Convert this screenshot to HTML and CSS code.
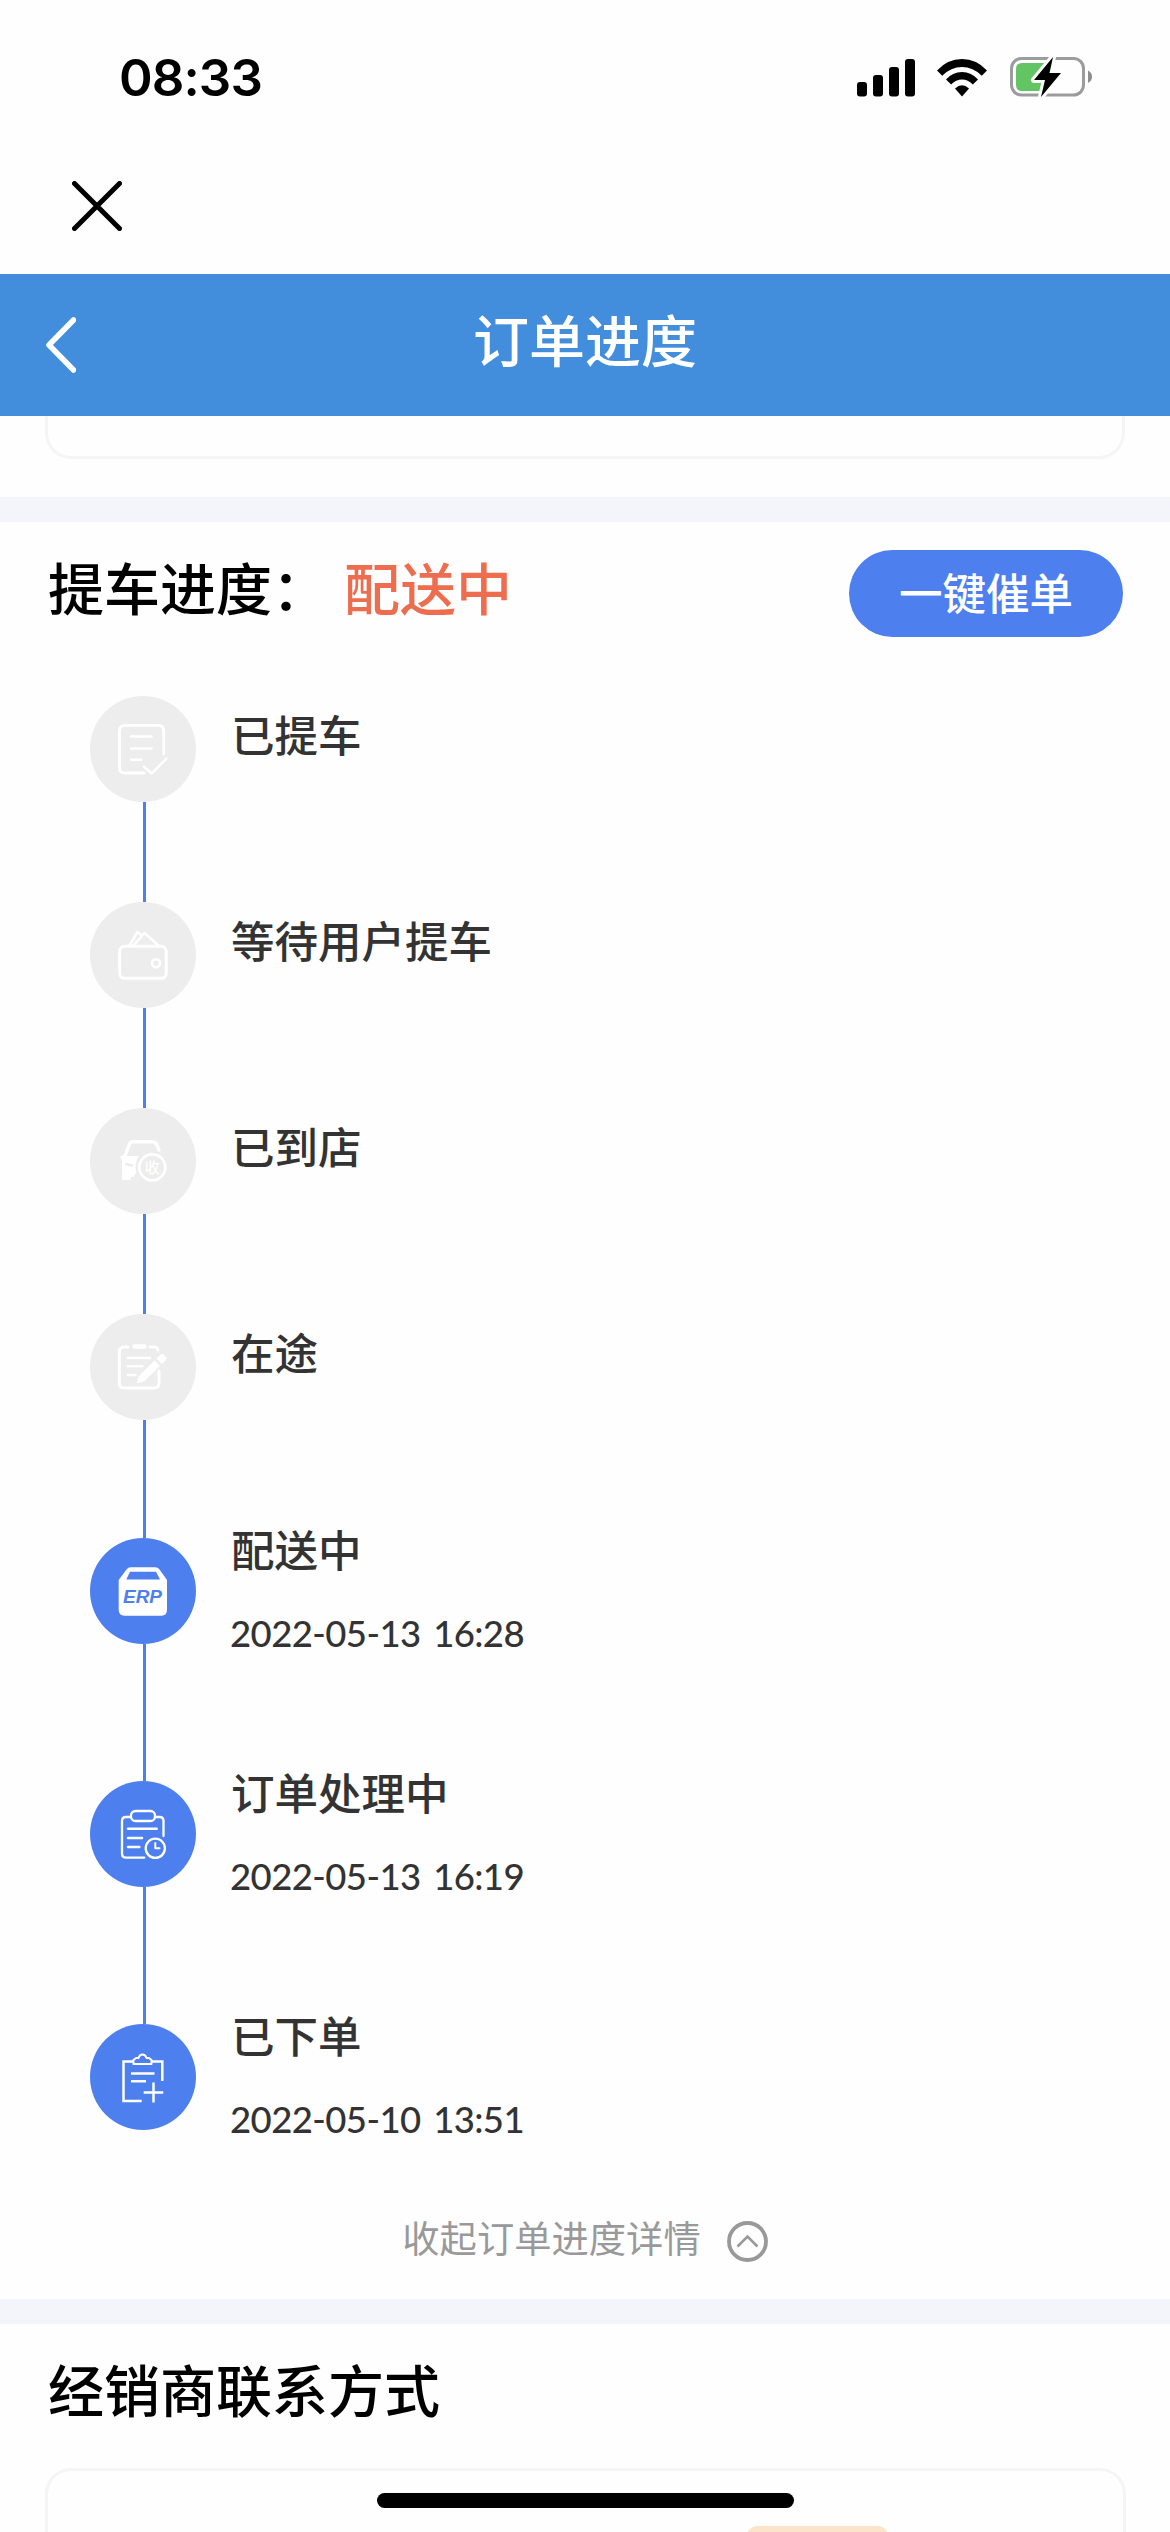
FILE: index.html
```html
<!DOCTYPE html>
<html lang="zh-CN">
<head>
  <meta charset="UTF-8" />
  <meta name="viewport" content="width=device-width, initial-scale=1.0"/>
  <title>订单进度</title>
  <link rel="stylesheet" href="styles.css">
</head>
<body>
<div class="page">

  <!-- 状态栏 -->
  <div class="status-bar">
    <div class="time">08:33</div>
    <div class="status-icons">
      <svg class="signal" width="58" height="38" viewBox="0 0 58 38">
        <rect x="0" y="23" width="10" height="14.5" rx="3"/>
        <rect x="16" y="16" width="10" height="21.5" rx="3"/>
        <rect x="32" y="8" width="10" height="29.5" rx="3"/>
        <rect x="48" y="0" width="10" height="37.5" rx="3"/>
      </svg>
      <svg class="wifi" width="50" height="38" viewBox="0 0 50 38">
        <path d="M0 11.500Q10.500 0 25 0T50 11.500L44.800 16.700Q36 8 25 8T5.200 16.700Z"/>
        <path d="M9 20.500Q15.500 13 25 13T41 20.500L35.800 25.500Q31 20.500 25 20.500T14.200 25.500Z"/>
        <path d="M18 29.500Q25 23 32 29.500L25 37.500Z"/>
      </svg>
      <svg class="battery" width="83" height="42" viewBox="0 0 83 42">
        <rect x="1.500" y="2.500" width="72" height="36.500" rx="10" fill="none" stroke="#9c9c9e" stroke-width="3"/>
        <path d="M12 7H38V35H12Q6 35 6 29V13Q6 7 12 7Z" fill="#62c462"/>
        <path d="M78 14.500Q82 16.500 82 20.700T78 27Z" fill="#8e8e90"/>
        <path d="M43 1L24 24H35L31 41L51 17H39.500Z" fill="#000" stroke="#fff" stroke-width="6" stroke-linejoin="round" paint-order="stroke"/>
      </svg>
    </div>
  </div>

  <div class="close-bar">
    <svg width="50" height="50" viewBox="0 0 50 50"><path d="M2.500 2.500L47.500 47.500M47.500 2.500L2.500 47.500" fill="none" stroke="#000" stroke-width="5" stroke-linecap="round"/></svg>
  </div>

  <!-- 标题栏 -->
  <header class="nav">
    <svg width="30" height="56" viewBox="0 0 30 56"><path d="M27.500 3L3 28L27.500 53" fill="none" stroke="#fff" stroke-width="5.500" stroke-linecap="round" stroke-linejoin="round"/></svg>
    <h1>订单进度</h1>
  </header>

  <div class="prev-section">
    <div class="card-end"></div>
  </div>

  <!-- 提车进度 -->
  <section class="progress">
    <div class="progress-head">
      <h2>提车进度：</h2>
      <span class="state">配送中</span>
      <button class="urge">一键催单</button>
    </div>

    <ul class="steps">
      <li class="step">
        <div class="rail">
          <svg class="dot" viewBox="0 0 106 106">
            <path d="M54 77H35Q29.500 77 29.500 71.500V35Q29.500 29.300 35 29.300H68Q73.700 29.300 73.700 35V58" stroke-width="2.800"/>
            <path d="M41 40.500H61.500M41 52.500H61.500M41 63.700H51.300M54 70.700L61.700 77.500L76.500 62.500" stroke-width="2.400"/>
          </svg>
          <i class="line"></i>
        </div>
        <div class="info"><h3>已提车</h3></div>
      </li>
      <li class="step">
        <div class="rail">
          <svg class="dot" viewBox="0 0 106 106">
            <rect x="29.700" y="44.300" width="46.500" height="32" rx="5" stroke-width="3"/>
            <path d="M39.500 43.500L47.500 30L51 33M43.500 43.500L54.500 31L68.500 43.500" stroke-width="2.600"/>
            <circle cx="66" cy="61.300" r="4" stroke-width="2.600"/>
          </svg>
          <i class="line"></i>
        </div>
        <div class="info"><h3>等待用户提车</h3></div>
      </li>
      <li class="step">
        <div class="rail">
          <svg class="dot" viewBox="0 0 106 106">
            <path d="M35 48L39.500 36Q40.500 33.700 43 33.700H62Q65 33.700 66.500 36L69 42" stroke-width="3.400"/>
            <path d="M30 49L35 46L36 48H49Q44 55 46 65L43.500 69H41V72H32V52Z" fill="#fff" stroke="none"/>
            <path d="M36 56L42 57.500" stroke="#ededed" stroke-width="2.400"/>
            <circle cx="62.300" cy="59.300" r="13" stroke-width="2.700"/>
            <text class="shou" x="62.300" y="65">收</text>
          </svg>
          <i class="line"></i>
        </div>
        <div class="info"><h3>已到店</h3></div>
      </li>
      <li class="step step-last-todo">
        <div class="rail">
          <svg class="dot" viewBox="0 0 106 106">
            <path d="M38 33H34Q29.300 33 29.300 38V69Q29.300 74 34 74H64Q69 74 69 69V57M60 33H64Q67 33 68 36" stroke-width="3"/>
            <path d="M44.500 32.500H54.500" stroke-width="4.500"/>
            <path d="M38 44H60M38 52.300H52.500M38 61H45.500" stroke-width="2.600"/>
            <path d="M47 69.500L48.500 62.500L64.500 46.500L70 52L54 67.500ZM66.500 44.500L71 40L73 40L76.500 43.500L76 46L72 50Z" fill="#fff" stroke="none"/>
          </svg>
          <i class="line"></i>
        </div>
        <div class="info"><h3>在途</h3></div>
      </li>
      <li class="step done">
        <div class="rail">
          <svg class="dot" viewBox="0 0 106 106">
            <path d="M41 29.300H65Q68 29.300 69.500 31.500L77 42V72Q77 77.700 71.500 77.700H34.500Q28.700 77.700 28.700 72V42L36.500 31.500Q38 29.300 41 29.300Z" fill="#fff" stroke="none"/>
            <path d="M40 33.700H66L70 41.500H36.300Z" fill="#4d80ee" stroke="none"/>
            <text class="erp" x="52.500" y="65">ERP</text>
          </svg>
          <i class="line"></i>
        </div>
        <div class="info"><h3>配送中</h3><p>2022-05-13 16:28</p></div>
      </li>
      <li class="step done">
        <div class="rail">
          <svg class="dot" viewBox="0 0 106 106">
            <path d="M41 36H36Q32 36 32 40V72.500Q32 76.700 36 76.700H54.300M65 36H69.500Q73.500 36 73.500 40V55" stroke-width="2.300"/>
            <rect x="41" y="30" width="24" height="10" rx="4.500" stroke-width="2.300"/>
            <path d="M38 47.700H66.700M38 57H52M38 66H49.300" stroke-width="2.500"/>
            <circle cx="65.300" cy="67.300" r="9.600" stroke-width="2.300"/>
            <path d="M65.300 62V67.300H69.500" stroke-width="2"/>
          </svg>
          <i class="line"></i>
        </div>
        <div class="info"><h3>订单处理中</h3><p>2022-05-13 16:19</p></div>
      </li>
      <li class="step done">
        <div class="rail">
          <svg class="dot" viewBox="0 0 106 106">
            <path d="M43 37.500H33.500V77H51.700M62 37.500H72.300V57" stroke-width="2.500" stroke-linecap="butt" stroke-linejoin="miter"/>
            <path d="M43.500 40V36L46 34H48.500Q49.500 30.500 52.500 30.500T56.500 34H59L61.500 36V40Z" stroke-width="2"/>
            <path class="flat" d="M41 49.500H64.500M41 57.200H56M53.700 68.500H73.300M63.500 58.500V78.500" stroke-width="2.500" stroke-linecap="butt"/>
          </svg>
        </div>
        <div class="info"><h3>已下单</h3><p>2022-05-10 13:51</p></div>
      </li>
    </ul>

    <div class="fold">
      <span>收起订单进度详情</span>
      <svg width="41" height="41" viewBox="0 0 41 41" fill="none" stroke="#999">
        <circle cx="20.500" cy="20.500" r="18.500" stroke-width="3.800"/>
        <path d="M10.500 25.500L20.500 15.500L30.500 25.500" stroke-width="2.600"/>
      </svg>
    </div>
  </section>

  <!-- 经销商 -->
  <section class="dealer">
    <h2>经销商联系方式</h2>
    <div class="dealer-card"><span class="tag"></span></div>
  </section>

  <div class="home-bar"></div>
</div>
</body>
</html>
```
FILE: styles.css
```css
* {
  margin: 0;
  padding: 0;
  box-sizing: border-box;
}

body {
  background: #fff;
  font-family: "Noto Sans CJK SC", "Noto Sans", sans-serif;
  color: #000;
}

.page {
  position: relative;
  width: 1170px;
  height: 2532px;
  overflow: hidden;
  background: #fefefe;
}

/* 状态栏 */
.status-bar {
  display: flex;
  justify-content: space-between;
  height: 156px;
  padding: 47px 77px 0 119px;
}

.time {
  font-family: Inter, sans-serif;
  font-size: 51px;
  font-weight: 600;
  line-height: 62px;
  letter-spacing: -0.900px;
}

.status-icons {
  display: flex;
  align-items: flex-start;
  padding-top: 12px;
}

.wifi {
  margin-left: 22px;
}

.battery {
  margin: -3px 0 0 23px;
}

.close-bar {
  height: 118px;
  padding: 25px 72px;
}

/* 标题栏 */
.nav {
  display: flex;
  align-items: center;
  height: 142px;
  padding: 0 46px;
  background: #428edc;
}

.nav h1 {
  flex: 1;
  margin: -14px 30px 0 0;
  color: #fff;
  font-size: 56px;
  font-weight: 500;
  line-height: 80px;
  text-align: center;
}

.prev-section {
  height: 106px;
  padding: 0 45px;
  border-bottom: 25px solid #f3f5fa;
}

.card-end {
  height: 43px;
  border: 3px solid #f5f5f5;
  border-top: none;
  border-radius: 0 0 26px 26px;
}

/* 进度 */
.progress {
  height: 1802px;
  border-bottom: 25px solid #f3f5fa;
}

.progress-head {
  display: flex;
  align-items: flex-start;
  height: 174px;
  padding: 24px 47px 0 48px;
}

h2 {
  font-size: 56px;
  font-weight: 500;
  line-height: 80px;
}

.state {
  margin-left: 16px;
  color: #ed6d4e;
  font-size: 56px;
  font-weight: 500;
  line-height: 80px;
}

.urge {
  width: 274px;
  height: 87px;
  margin: 4px 0 0 auto;
  padding-bottom: 4px;
  border: none;
  border-radius: 44px;
  background: #4d80ee;
  color: #fff;
  font-family: inherit;
  font-size: 43.500px;
  font-weight: 500;
  line-height: 80px;
}

.steps {
  padding-left: 90px;
  list-style: none;
}

.step {
  display: flex;
  height: 206px;
}

.step-last-todo {
  height: 224px;
}

.step.done {
  height: 243px;
}

.step:last-child {
  height: 106px;
}

.rail {
  display: flex;
  flex-direction: column;
  width: 106px;
}

.dot {
  width: 106px;
  height: 106px;
  border-radius: 50%;
  background: #ededed;
  fill: none;
  stroke: #fff;
  stroke-linecap: round;
  stroke-linejoin: round;
}

.done .dot {
  background: #4d80ee;
}

.line {
  flex: 1;
  width: 3px;
  margin-left: 53px;
  background: #4d80ee;
}

.shou {
  fill: #fff;
  stroke: none;
  font-size: 15px;
  font-weight: 500;
  text-anchor: middle;
}

.erp {
  fill: #4d80ee;
  stroke: none;
  font-family: "Liberation Sans", sans-serif;
  font-size: 19px;
  font-style: italic;
  font-weight: bold;
  text-anchor: middle;
}

.info {
  margin: 8px 0 0 35px;
  color: #333;
}

.done .info {
  margin-top: -19px;
}

.info h3 {
  font-size: 43.500px;
  font-weight: 500;
  line-height: 60px;
}

.info p {
  margin: 29px 0 0 -1px;
  font-family: Lato, sans-serif;
  font-size: 36.500px;
  font-weight: 500;
  line-height: 50px;
  letter-spacing: -0.600px;
  word-spacing: 4px;
}

.fold {
  display: flex;
  justify-content: center;
  align-items: center;
  margin-top: 81px;
  color: #999;
  font-size: 37.300px;
  line-height: 52px;
}

.fold svg {
  margin: 9px 0 0 26px;
}

/* 经销商 */
.dealer {
  padding: 24px 44px 0 45px;
}

.dealer h2 {
  margin-left: 3px;
}

.dealer-card {
  height: 200px;
  margin-top: 40px;
  padding: 55px 0 0 699px;
  border: 3px solid #f5f5f5;
  border-radius: 26px;
}

.tag {
  display: block;
  width: 141px;
  height: 50px;
  border-radius: 10px;
  background: #fbe4c9;
}

/* 底部横条盖在内容上 */
.home-bar {
  position: absolute;
  left: 377px;
  bottom: 24px;
  width: 417px;
  height: 15px;
  border-radius: 8px;
  background: #000;
}
```
